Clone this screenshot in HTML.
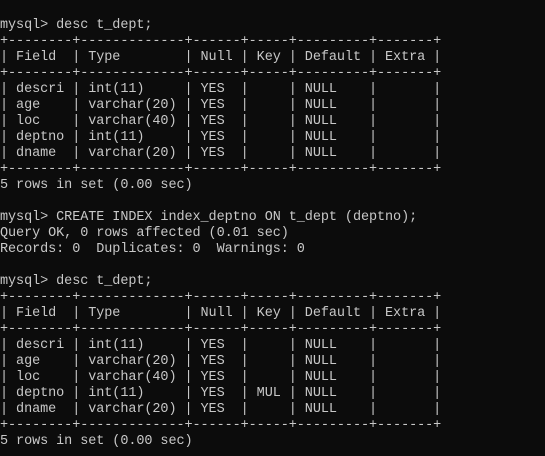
<!DOCTYPE html>
<html><head><meta charset="utf-8"><style>
html,body{margin:0;padding:0;background:#0c0c0c;width:545px;height:456px;overflow:hidden}
pre{margin:0;padding:18px 0 0 0;font-family:"Liberation Mono",monospace;font-size:13.5px;letter-spacing:-0.08px;line-height:16px;color:#c8c8c8}
</style></head><body><pre>mysql&gt; desc t_dept;
+--------+-------------+------+-----+---------+-------+
| Field  | Type        | Null | Key | Default | Extra |
+--------+-------------+------+-----+---------+-------+
| descri | int(11)     | YES  |     | NULL    |       |
| age    | varchar(20) | YES  |     | NULL    |       |
| loc    | varchar(40) | YES  |     | NULL    |       |
| deptno | int(11)     | YES  |     | NULL    |       |
| dname  | varchar(20) | YES  |     | NULL    |       |
+--------+-------------+------+-----+---------+-------+
5 rows in set (0.00 sec)

mysql&gt; CREATE INDEX index_deptno ON t_dept (deptno);
Query OK, 0 rows affected (0.01 sec)
Records: 0  Duplicates: 0  Warnings: 0

mysql&gt; desc t_dept;
+--------+-------------+------+-----+---------+-------+
| Field  | Type        | Null | Key | Default | Extra |
+--------+-------------+------+-----+---------+-------+
| descri | int(11)     | YES  |     | NULL    |       |
| age    | varchar(20) | YES  |     | NULL    |       |
| loc    | varchar(40) | YES  |     | NULL    |       |
| deptno | int(11)     | YES  | MUL | NULL    |       |
| dname  | varchar(20) | YES  |     | NULL    |       |
+--------+-------------+------+-----+---------+-------+
5 rows in set (0.00 sec)</pre></body></html>
